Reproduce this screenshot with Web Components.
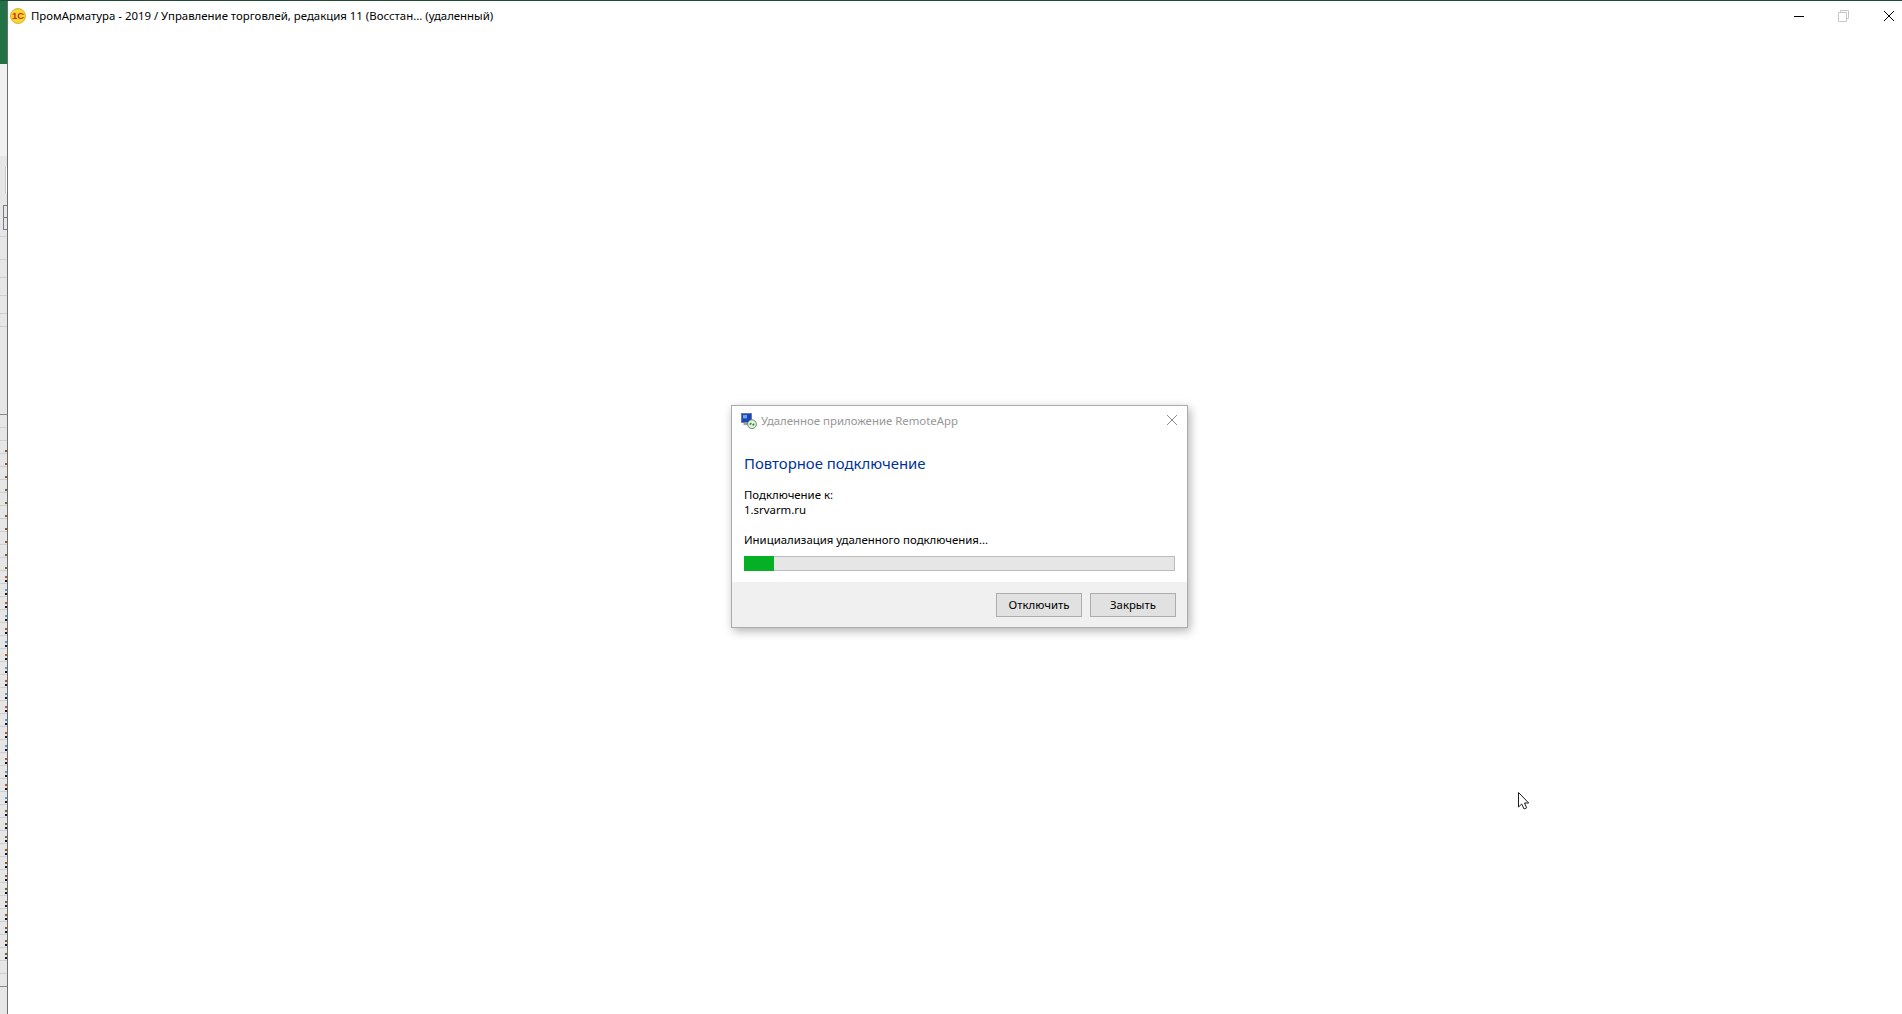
<!DOCTYPE html>
<html lang="ru">
<head>
<meta charset="utf-8">
<title>RemoteApp</title>
<style>
  html, body { margin: 0; height: 100%; background: #fff; overflow: hidden; }
  body { font: 11.4px "Noto Sans", "Liberation Sans", sans-serif; color: #000; }
</style>
</head>
<body>
<desktop-shell>
  <sheet-strip slot="strip"></sheet-strip>
  <app-window title-text="ПромАрматура - 2019 / Управление торговлей, редакция 11 (Восстан... (удаленный)">
    <remote-dialog caption="Удаленное приложение RemoteApp" heading="Повторное подключение">
      <div>Подключение к:</div>
      <div>1.srvarm.ru</div>
      <status-progress slot="status" label="Инициализация удаленного подключения..." value="7"></status-progress>
      <dialog-button slot="actions">Отключить</dialog-button>
      <dialog-button slot="actions">Закрыть</dialog-button>
    </remote-dialog>
    <mouse-pointer></mouse-pointer>
  </app-window>
</desktop-shell>

<script>
class DesktopShell extends HTMLElement {
  constructor() {
    super();
    this.attachShadow({ mode: 'open' }).innerHTML = `
      <style>
        :host { display: flex; width: 1902px; height: 1014px; overflow: hidden; }
        ::slotted(app-window) { flex: 1; min-width: 0; }
      </style>
      <slot name="strip"></slot>
      <slot></slot>`;
  }
}

// the bit of the spreadsheet window that shows behind the remote window
class SheetStrip extends HTMLElement {
  constructor() {
    super();
    const root = this.attachShadow({ mode: 'open' });
    root.innerHTML = `
      <style>
        :host { display: flex; flex-direction: column; width: 7px; height: 1014px; flex: none; background: #e6e6e6; overflow: hidden; }
        .top { height: 1px; flex: none; background: #1e4d33; }
        .green { height: 63px; flex: none; background: #217346; }
        .ribbon { height: 92px; flex: none; background: #f0f0f0; }
        .gap { flex: none; }
        .field { height: 26px; width: 2px; margin-left: 5px; background: #fff; border-left: 1px solid #c8c8c8; box-sizing: border-box; flex: none; }
        .btn { height: 11px; margin-left: 3px; flex: none; border: 1px solid #7a7a8a; border-right: 0; width: 3px; }
        .btn + .btn { border-top: 0; }
        .row { flex: none; box-sizing: border-box; border-bottom: 1px solid #cfcfcf; display: flex; flex-direction: column; align-items: flex-end; justify-content: flex-end; gap: 2px; padding-bottom: 1px; }
        .row.strong { border-bottom-color: #8c8c8c; }
        i { display: block; width: 2px; height: 2px; }
      </style>
      <div class="top"></div><div class="green"></div><div class="ribbon"></div>
      <div class="gap" style="height:11px"></div>
      <div class="field"></div>
      <div class="gap" style="height:12px"></div>
      <div class="btn"></div><div class="btn"></div>
      <div id="rows" style="display:flex;flex-direction:column"></div>`;
    const rows = root.getElementById('rows');
    const add = (h, strong, marks) => {
      const r = document.createElement('div');
      r.className = 'row' + (strong ? ' strong' : '');
      r.style.height = h + 'px';
      (marks || []).forEach(c => {
        const d = document.createElement('i');
        d.style.background = c;
        r.appendChild(d);
      });
      rows.appendChild(r);
    };
    [7, 23, 18, 18, 18, 13].forEach(h => add(h));
    add(88, true);
    let y = 426, n = 0;
    while (y < 990) {
      y += 13;
      n++;
      let marks = [];
      if (y >= 457 && y < 587) marks = ['#8a5a20'];
      else if (y >= 587 && y < 823) marks = n % 2 ? ['#b5561f', '#14142a'] : ['#4f9fd0', '#14142a'];
      else if (y >= 823 && y < 980) marks = ['#8a5a20', '#14142a'];
      add(13, y >= 990, marks);
    }
  }
}

class AppWindow extends HTMLElement {
  constructor() {
    super();
    this.attachShadow({ mode: 'open' }).innerHTML = `
      <style>
        :host { display: flex; flex-direction: column; height: 1014px; box-sizing: border-box; background: #fff; border-left: 1px solid #6e6e6e; }
        .edge { height: 1px; background: #1e4d33; flex: none; margin-left: -1px; }
        .bar { display: flex; align-items: center; height: 29px; flex: none; padding-left: 2px; }
        .logo { width: 16px; height: 16px; flex: none; margin-right: 5px; }
        .name { flex: 1; font-size: 11.4px; white-space: nowrap; color: #000; }
        .ctl { width: 45px; display: flex; justify-content: center; align-items: center; height: 29px; flex: none; }
        .ctl:last-child { width: 26px; margin-left: 10px; }
        .ctl svg { width: 12px; height: 12px; display: block; }
        .canvas { position: relative; flex: 1; }
      </style>
      <div class="edge"></div>
      <div class="bar">
        <svg class="logo" viewBox="0 0 16 16">
          <circle cx="8" cy="8" r="7.5" fill="#f8da2e" stroke="#c9a21a" stroke-width=".8"/>
          <text x="8" y="11" text-anchor="middle" font-family="Liberation Sans, sans-serif" font-weight="700" font-size="9.5" fill="#dc1a1a">1С</text>
        </svg>
        <span class="name"></span>
        <span class="ctl"><svg viewBox="0 0 12 12"><path d="M1 6.5h10" stroke="#000" stroke-width="1"/></svg></span>
        <span class="ctl"><svg viewBox="0 0 12 12" fill="none" stroke="#c8c8c8"><path d="M2.5 2.5V.5h8v8h-2"/><path d="M.5 2.5h8v9h-8z"/></svg></span>
        <span class="ctl"><svg viewBox="0 0 12 12"><path d="M1 1l10 10M11 1L1 11" stroke="#000" stroke-width="1" fill="none"/></svg></span>
      </div>
      <div class="canvas"><slot></slot></div>`;
    this.shadowRoot.querySelector('.name').textContent = this.getAttribute('title-text');
  }
}

class RemoteDialog extends HTMLElement {
  constructor() {
    super();
    this.attachShadow({ mode: 'open' }).innerHTML = `
      <style>
        :host { position: absolute; left: 723px; top: 375px; width: 457px; height: 223px; box-sizing: border-box; display: flex; flex-direction: column;
          background: #fff; border: 1px solid #ababab; box-shadow: 2px 3px 9px rgba(0,0,0,.3); font-size: 11.4px; }
        .cap { display: flex; align-items: center; height: 29px; padding: 0 5px 0 9px; flex: none; color: #979797; }
        .cap .ico { width: 16px; height: 16px; margin-right: 4px; flex: none; }
        .cap .t { flex: 1; white-space: nowrap; }
        .cap .x { width: 12px; height: 12px; margin-right: 4px; margin-top: -1px; }
        .body { flex: 1; padding: 0 12px; }
        h1 { margin: 18px 0 0; font-weight: 400; font-size: 14.9px; line-height: 20px; color: #003399; }
        .info { margin-top: 14px; line-height: 15px; }
        .foot { height: 45px; flex: none; background: #f0f0f0; display: flex; justify-content: flex-end; align-items: center; gap: 8px; padding: 0 11px 0 0; box-sizing: border-box; }
      </style>
      <div class="cap">
        <svg class="ico" viewBox="0 0 16 16">
          <rect x=".5" y=".5" width="10" height="9" fill="#1b46b8" stroke="#5a6a8a" stroke-width=".7"/>
          <rect x="2" y="2" width="4" height="3.4" fill="#6fa8ef"/>
          <rect x="2.5" y="9.5" width="6" height="2.5" fill="#9aa0aa"/>
          <circle cx="11" cy="11.2" r="4.4" fill="#e6efe4" stroke="#5f7f5a" stroke-width=".9"/>
          <path d="M8.8 11.6l1.6-1.6M13.2 10.8l-1.6 1.6" stroke="#1f9a2c" stroke-width="1.5" fill="none"/>
        </svg>
        <span class="t" id="cap"></span>
        <svg class="x" viewBox="0 0 12 12"><path d="M1 1l10 10M11 1L1 11" stroke="#8a8a8a" fill="none"/></svg>
      </div>
      <div class="body">
        <h1 id="head"></h1>
        <div class="info"><slot></slot></div>
        <slot name="status"></slot>
      </div>
      <div class="foot"><slot name="actions"></slot></div>`;
    this.shadowRoot.getElementById('cap').textContent = this.getAttribute('caption');
    this.shadowRoot.getElementById('head').textContent = this.getAttribute('heading');
  }
}

class StatusProgress extends HTMLElement {
  constructor() {
    super();
    this.attachShadow({ mode: 'open' }).innerHTML = `
      <style>
        :host { display: block; margin-top: 15px; }
        .l { line-height: 15px; }
        .track { margin-top: 9px; height: 15px; box-sizing: border-box; border: 1px solid #bcbcbc; background: #e6e6e6; width: 431px; }
        .fill { background: #06b025; margin: -1px 0 0 -1px; height: 15px; }
      </style>
      <div class="l"></div>
      <div class="track"><div class="fill"></div></div>`;
    this.shadowRoot.querySelector('.l').textContent = this.getAttribute('label');
    this.shadowRoot.querySelector('.fill').style.width = this.getAttribute('value') + '%';
  }
}

class DialogButton extends HTMLElement {
  constructor() {
    super();
    this.attachShadow({ mode: 'open' }).innerHTML = `
      <style>
        :host { display: flex; width: 86px; height: 24px; box-sizing: border-box; align-items: center; justify-content: center; background: #e1e1e1; border: 1px solid #adadad; font-size: 11.4px; }
      </style>
      <slot></slot>`;
  }
}

class MousePointer extends HTMLElement {
  constructor() {
    super();
    this.attachShadow({ mode: 'open' }).innerHTML = `
      <style>
        :host { position: absolute; left: 1509px; top: 762px; width: 14px; height: 19px; display: block; }
        svg { display: block; }
      </style>
      <svg width="14" height="19" viewBox="0 0 14 19">
        <path d="M1.5.5v14.5l3.2-3 2.4 5 2.6-1.2-2.2-4.8h4.2z" fill="#fff" stroke="#1c1c1c" stroke-width="1"/>
      </svg>`;
  }
}

customElements.define('desktop-shell', DesktopShell);
customElements.define('sheet-strip', SheetStrip);
customElements.define('app-window', AppWindow);
customElements.define('remote-dialog', RemoteDialog);
customElements.define('status-progress', StatusProgress);
customElements.define('dialog-button', DialogButton);
customElements.define('mouse-pointer', MousePointer);
</script>
</body>
</html>
